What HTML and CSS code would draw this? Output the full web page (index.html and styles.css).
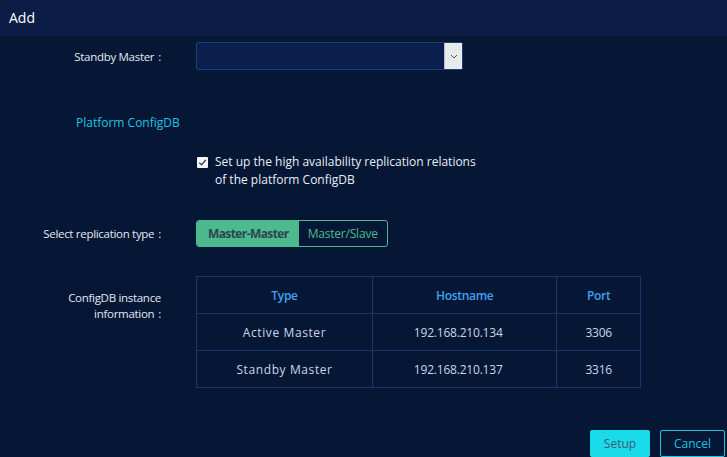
FILE: index.html
```html
<!DOCTYPE html>
<html>
<head>
<meta charset="utf-8">
<link rel="stylesheet" href="styles.css">
</head>
<body>
<div class="header">Add</div>
<div class="content">
  <div class="row row-select">
    <div class="label">Standby Master<span class="colon">:</span></div>
    <div class="select">
      <div class="select-field"></div>
      <div class="select-arrow">
        <svg width="8" height="5" viewBox="0 0 8 5"><path d="M1 1 L4 4 L7 1" fill="none" stroke="#555" stroke-width="1"/></svg>
      </div>
    </div>
  </div>
  <div class="section-title">Platform ConfigDB</div>
  <div class="row row-check">
    <div class="label"></div>
    <div class="check">
      <div class="checkbox">
        <svg width="11" height="11" viewBox="0 0 11 11"><path d="M2.2 5.6 L4.5 7.8 L8.8 3" fill="none" stroke="#33405a" stroke-width="1.3"/></svg>
      </div>
      <div class="check-text">Set up the high availability replication relations<br>of the platform ConfigDB</div>
    </div>
  </div>
  <div class="row row-seg">
    <div class="label">Select replication type<span class="colon">:</span></div>
    <div class="seg">
      <div class="seg-item active">Master-Master</div>
      <div class="seg-item">Master/Slave</div>
    </div>
  </div>
  <div class="row row-table">
    <div class="label label-multi">ConfigDB instance<br>information<span class="colon">:</span></div>
    <table class="tbl">
      <thead>
        <tr><th class="c1">Type</th><th class="c2">Hostname</th><th class="c3">Port</th></tr>
      </thead>
      <tbody>
        <tr><td>Active Master</td><td class="num host">192.168.210.134</td><td class="num">3306</td></tr>
        <tr><td>Standby Master</td><td class="num host">192.168.210.137</td><td class="num">3316</td></tr>
      </tbody>
    </table>
  </div>
  <div class="footer">
    <button class="btn btn-primary">Setup</button>
    <button class="btn btn-default">Cancel</button>
  </div>
</div>
</body>
</html>
```
FILE: styles.css
```css
html, body {
  margin: 0;
  padding: 0;
  background: #061736;
  font-family: "Open Sans", "Noto Sans", sans-serif;
  color: #e6ecf5;
  font-size: 12px;
}
.header {
  height: 36px;
  line-height: 36px;
  background: #0b1d47;
  padding-left: 9px;
  font-size: 14px;
  color: #ffffff;
}
.content {
  display: flex;
  flex-direction: column;
}
.row {
  display: flex;
  align-items: flex-start;
}
.label {
  width: 161px;
  text-align: right;
  flex-shrink: 0;
  margin-right: 35px;
  color: #e3e9f2;
  font-size: 11.5px;
  letter-spacing: -0.3px;
}
.colon {
  margin-left: 4px;
}
.row-select {
  margin-top: 6px;
  align-items: center;
}
.select {
  display: flex;
  width: 267px;
  height: 28px;
  box-sizing: border-box;
  border: 1px solid #1d3d74;
  border-radius: 2px;
  background: #0b1f4e;
}
.select-field {
  flex: 1;
}
.select-arrow {
  width: 17px;
  background: #e9eaec;
  display: flex;
  align-items: center;
  justify-content: center;
  border-left: 1px solid #b8bcc4;
}
.section-title {
  margin-top: 38px;
  padding-left: 76px;
  color: #1cc6e0;
  height: 30px;
  line-height: 30px;
}
.row-check {
  margin-top: 15px;
}
.check {
  display: flex;
  align-items: flex-start;
}
.checkbox {
  width: 11px;
  height: 11px;
  background: #f4f6f9;
  border-radius: 1px;
  margin-top: 4px;
  margin-right: 7px;
  margin-left: 1px;
  display: flex;
}
.check-text {
  line-height: 18px;
  color: #e9eef5;
}
.row-seg {
  margin-top: 31px;
  align-items: center;
}
.seg {
  display: flex;
  height: 27px;
  box-sizing: border-box;
  border: 1px solid #4cba8e;
  border-radius: 3px;
  overflow: hidden;
}
.seg-item {
  padding: 0 9px;
  line-height: 25px;
  color: #4cba8e;
  letter-spacing: -0.2px;
}
.seg-item.active {
  background: #4cba8e;
  color: #2d4550;
  font-weight: 700;
  letter-spacing: -0.6px;
  padding: 0 10px 0 11px;
}
.row-table {
  margin-top: 29px;
}
.label-multi {
  margin-top: 14px;
  line-height: 16px;
}
.tbl {
  border-collapse: collapse;
  width: 445px;
  border: 1px solid #173668;
}
.tbl th, .tbl td {
  border: 1px solid #173668;
  text-align: center;
  height: 36px;
  padding: 0;
}
.tbl th {
  color: #3da3f2;
  font-weight: 600;
  letter-spacing: -0.3px;
}
.tbl td {
  color: #c9d6e6;
  letter-spacing: 0.6px;
}
.tbl td.num {
  letter-spacing: -0.2px;
}
.tbl td.host {
  padding-right: 13px;
}
.c1 { width: 176px; }
.c2 { width: 184px; }
.c3 { width: 83px; }
.footer {
  display: flex;
  justify-content: flex-end;
  margin-top: 42px;
  padding-right: 2px;
  gap: 10px;
}
.btn {
  height: 27px;
  font-family: inherit;
  font-size: 12px;
  border-radius: 2px;
  padding: 0;
}
.btn-primary {
  width: 60px;
  background: #1adbea;
  border: 1px solid #1adbea;
  color: #3c5a72;
}
.btn-default {
  width: 65px;
  background: transparent;
  border: 1px solid #1cc6e0;
  color: #1cc6e0;
}
```
